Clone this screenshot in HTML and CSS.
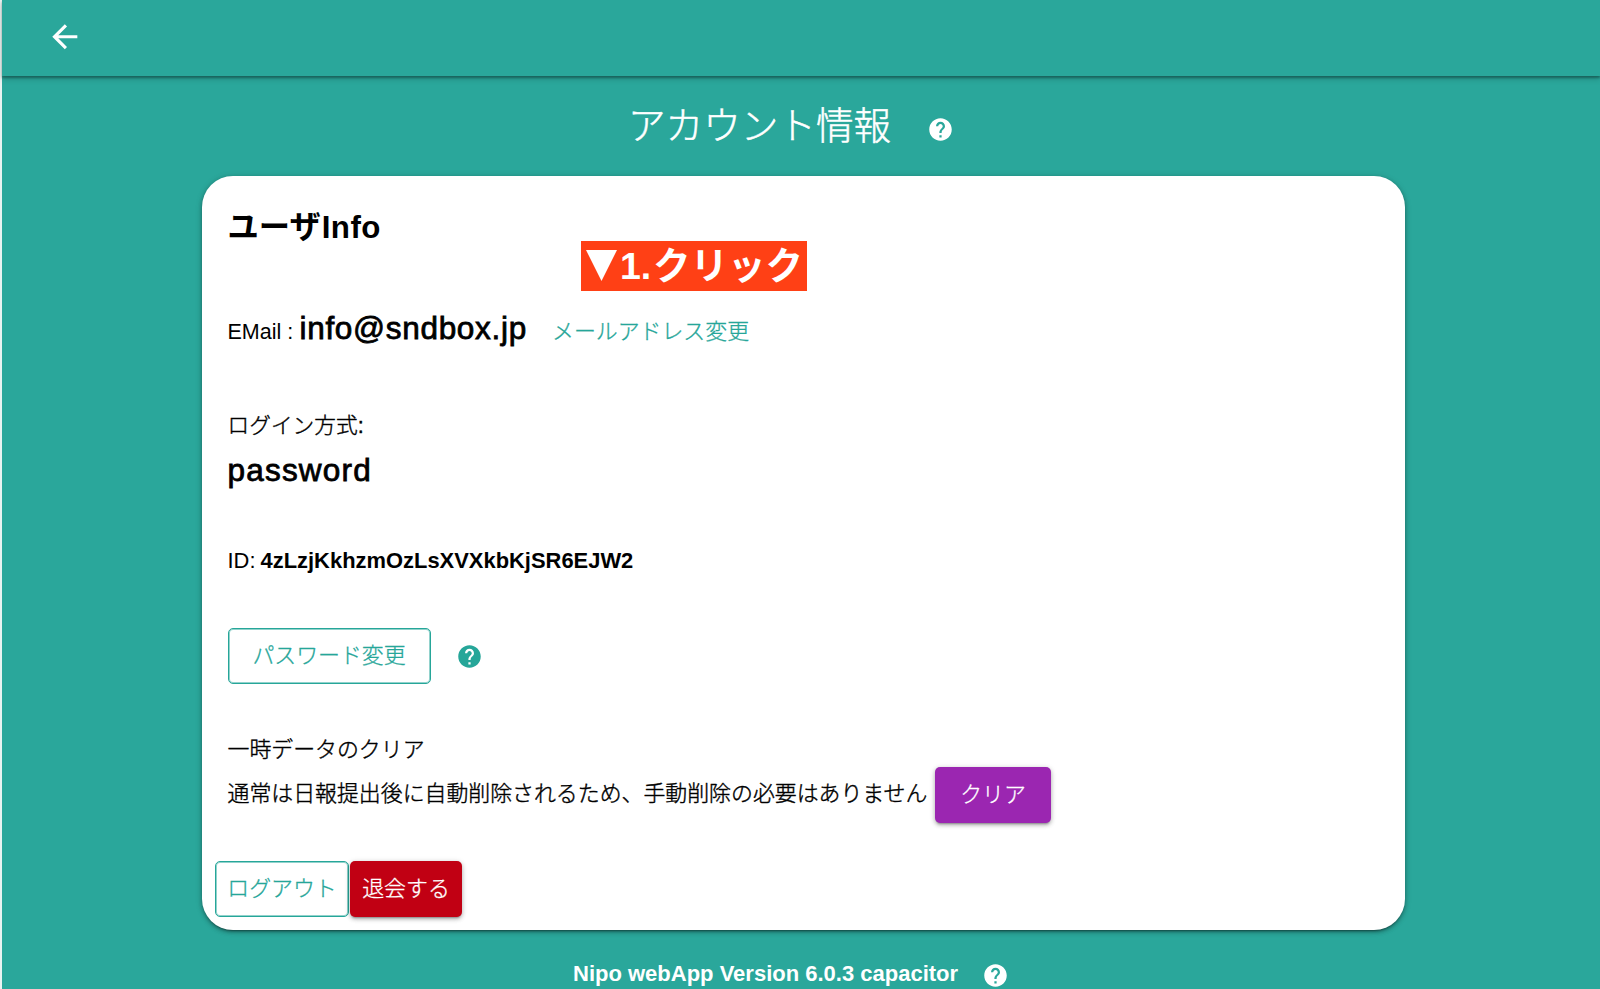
FILE: index.html
```html
<!DOCTYPE html>
<html lang="ja">
<head>
<meta charset="utf-8">
<title>アカウント情報</title>
<link rel="stylesheet" href="styles.css">
</head>
<body>
<svg class="defs" aria-hidden="true">
  <symbol id="help" viewBox="0 0 24 24"><path d="M12 2C6.48 2 2 6.48 2 12s4.48 10 10 10 10-4.48 10-10S17.52 2 12 2zm1 17h-2v-2h2v2zm2.07-7.75l-.9.92C13.45 12.9 13 13.5 13 15h-2v-.5c0-1.1.45-2.1 1.17-2.83l1.24-1.26c.37-.36.59-.86.59-1.41 0-1.1-.9-2-2-2s-2 .9-2 2H8c0-2.21 1.79-4 4-4s4 1.79 4 4c0 .88-.36 1.68-.93 2.25z"/></symbol>
</svg>
<div class="app">
  <header class="bar">
    <svg class="back" viewBox="0 0 24 24"><path d="M20 11H7.83l5.59-5.59L12 4l-8 8 8 8 1.41-1.41L7.83 13H20v-2z"/></svg>
  </header>
  <div class="title">
    <h1 class="title-text">アカウント情報</h1>
    <svg class="help"><use href="#help"/></svg>
  </div>
  <main class="card">
    <h2 class="heading">ユーザ<span class="heading-latin">Info</span></h2>
    <div class="row email">
      <span class="email-label">EMail :</span>
      <span class="value email-value">info@sndbox.jp</span>
      <a class="link">メールアドレス変更</a>
    </div>
    <div class="row method jp">ログイン方式:</div>
    <div class="row value password">password</div>
    <div class="row id"><span class="id-label">ID:</span><b class="id-value">4zLzjKkhzmOzLsXVXkbKjSR6EJW2</b></div>
    <div class="row change">
      <button class="btn outlined change-btn">パスワード変更</button>
      <svg class="help teal"><use href="#help"/></svg>
    </div>
    <div class="row cache-title jp">一時データのクリア</div>
    <div class="row cache">
      <span class="cache-text jp">通常は日報提出後に自動削除されるため、手動削除の必要はありません</span>
      <button class="btn filled clear">クリア</button>
    </div>
    <div class="actions">
      <button class="btn outlined logout">ログアウト</button>
      <button class="btn filled leave">退会する</button>
    </div>
    <div class="callout"><span class="triangle"></span><span class="step">1.</span><span>クリック</span></div>
  </main>
  <footer class="footer">
    <span class="version">Nipo webApp Version 6.0.3 capacitor</span>
    <svg class="help"><use href="#help"/></svg>
  </footer>
</div>
</body>
</html>
```
FILE: styles.css
```css
* { box-sizing: border-box; }
body {
  margin: 0;
  height: 989px;
  overflow: hidden;
  background: #e9f3f1;
  color: #000;
  font-family: "Liberation Sans", "Noto Sans CJK JP", sans-serif;
  font-size: 21.9px;
}
h1, h2 { margin: 0; }
.defs { position: absolute; width: 0; height: 0; }
.app { margin-left: 2px; height: 989px; background: #2aa79b; }
.bar {
  display: flex;
  align-items: center;
  height: 75.5px;
  padding: 0 0 2px 43.5px;
  box-shadow: 0 2px 2px rgba(0,0,0,.3), 0 3px 6px rgba(0,0,0,.18);
}
.back { width: 37.6px; height: 37.6px; fill: #fff; }
.title {
  display: flex;
  align-items: center;
  height: 100px;
  padding-left: 626px;
  color: #fff;
}
.title-text {
  width: 299px;
  font-size: 37.6px;
  font-weight: 300;
  line-height: 50px;
  white-space: nowrap;
  -webkit-text-stroke: .5px #fff;
}
.help { width: 27px; height: 27px; fill: #fff; flex: none; margin-top: 7px; }
.teal { fill: #26a699; margin: 1px 0 0 25px; }
.jp { font-weight: 300; -webkit-text-stroke: .4px #000; }
.card {
  position: relative;
  width: 1203px;
  height: 754px;
  margin-left: 200px;
  padding: 28px 25.5px 0;
  border-radius: 31px;
  background: #fff;
  box-shadow: 0 3px 2px -2px rgba(0,0,0,.35), 0 2px 4px rgba(0,0,0,.3), 0 1px 7px rgba(0,0,0,.15);
}
.heading {
  display: flex;
  align-items: baseline;
  height: 46px;
  font-size: 31.3px;
  line-height: 48px;
}
.heading-latin { margin-left: 1px; letter-spacing: .4px; }
.row { display: flex; align-items: center; height: 44px; line-height: 44px; white-space: nowrap; }
.email { align-items: baseline; margin-top: 56px; }
.email-label { width: 72px; font-size: 21.5px; }
.value { font-size: 31.5px; letter-spacing: .7px; -webkit-text-stroke: .8px #000; }
.email-value { width: 252.5px; }
.link { color: #26a699; font-weight: 300; -webkit-text-stroke: .3px #26a699; }
.method { margin-top: 54px; font-size: 21.7px; }
.password { margin-top: 0; letter-spacing: 1.2px; }
.id { margin-top: 47px; }
.id-label { width: 33px; }
.id-value { letter-spacing: .02px; }
.change { height: 56px; margin-top: 45px; }
.btn {
  height: 56px;
  padding: 0;
  border: 0;
  border-radius: 5px;
  font: 300 21.9px/52px "Liberation Sans", "Noto Sans CJK JP", sans-serif;
  white-space: nowrap;
  -webkit-text-stroke: .3px currentColor;
}
.outlined {
  border: 1px solid #26a699;
  background: #fff;
  color: #26a699;
  box-shadow: inset 0 0 0 1px rgba(38,166,153,.5);
}
.filled { color: #fff; box-shadow: 0 3px 2px -2px rgba(0,0,0,.25), 0 2px 4px rgba(0,0,0,.25), 0 1px 6px rgba(0,0,0,.12); }
.change-btn { width: 203px; }
.cache-title { margin-top: 44px; }
.cache { align-items: flex-start; }
.cache-text { width: 707.5px; }
.clear { width: 116px; margin-top: -5px; background: #9b26b1; }
.actions { display: flex; gap: 1px; margin: 45px 0 0 -12.5px; }
.logout { width: 134px; }
.leave { width: 112px; background: #c10013; }
.callout {
  position: absolute;
  left: 379px;
  top: 65px;
  display: flex;
  align-items: center;
  width: 226px;
  height: 50px;
  padding-left: 5px;
  background: #ff4015;
  color: #fff;
  font-size: 37.5px;
  font-weight: 700;
  line-height: 50px;
  white-space: nowrap;
}
.triangle { width: 31px; height: 31px; margin-right: 3px; background: #fff; clip-path: polygon(0 0, 100% 0, 50% 100%); }
.step { width: 33px; }
.footer { display: flex; align-items: flex-start; height: 59px; padding: 30px 0 0 571px; color: #fff; }
.version { width: 409px; font-size: 22px; font-weight: 700; line-height: 28px; white-space: nowrap; }
.footer .help { margin-top: 2.5px; }
```
